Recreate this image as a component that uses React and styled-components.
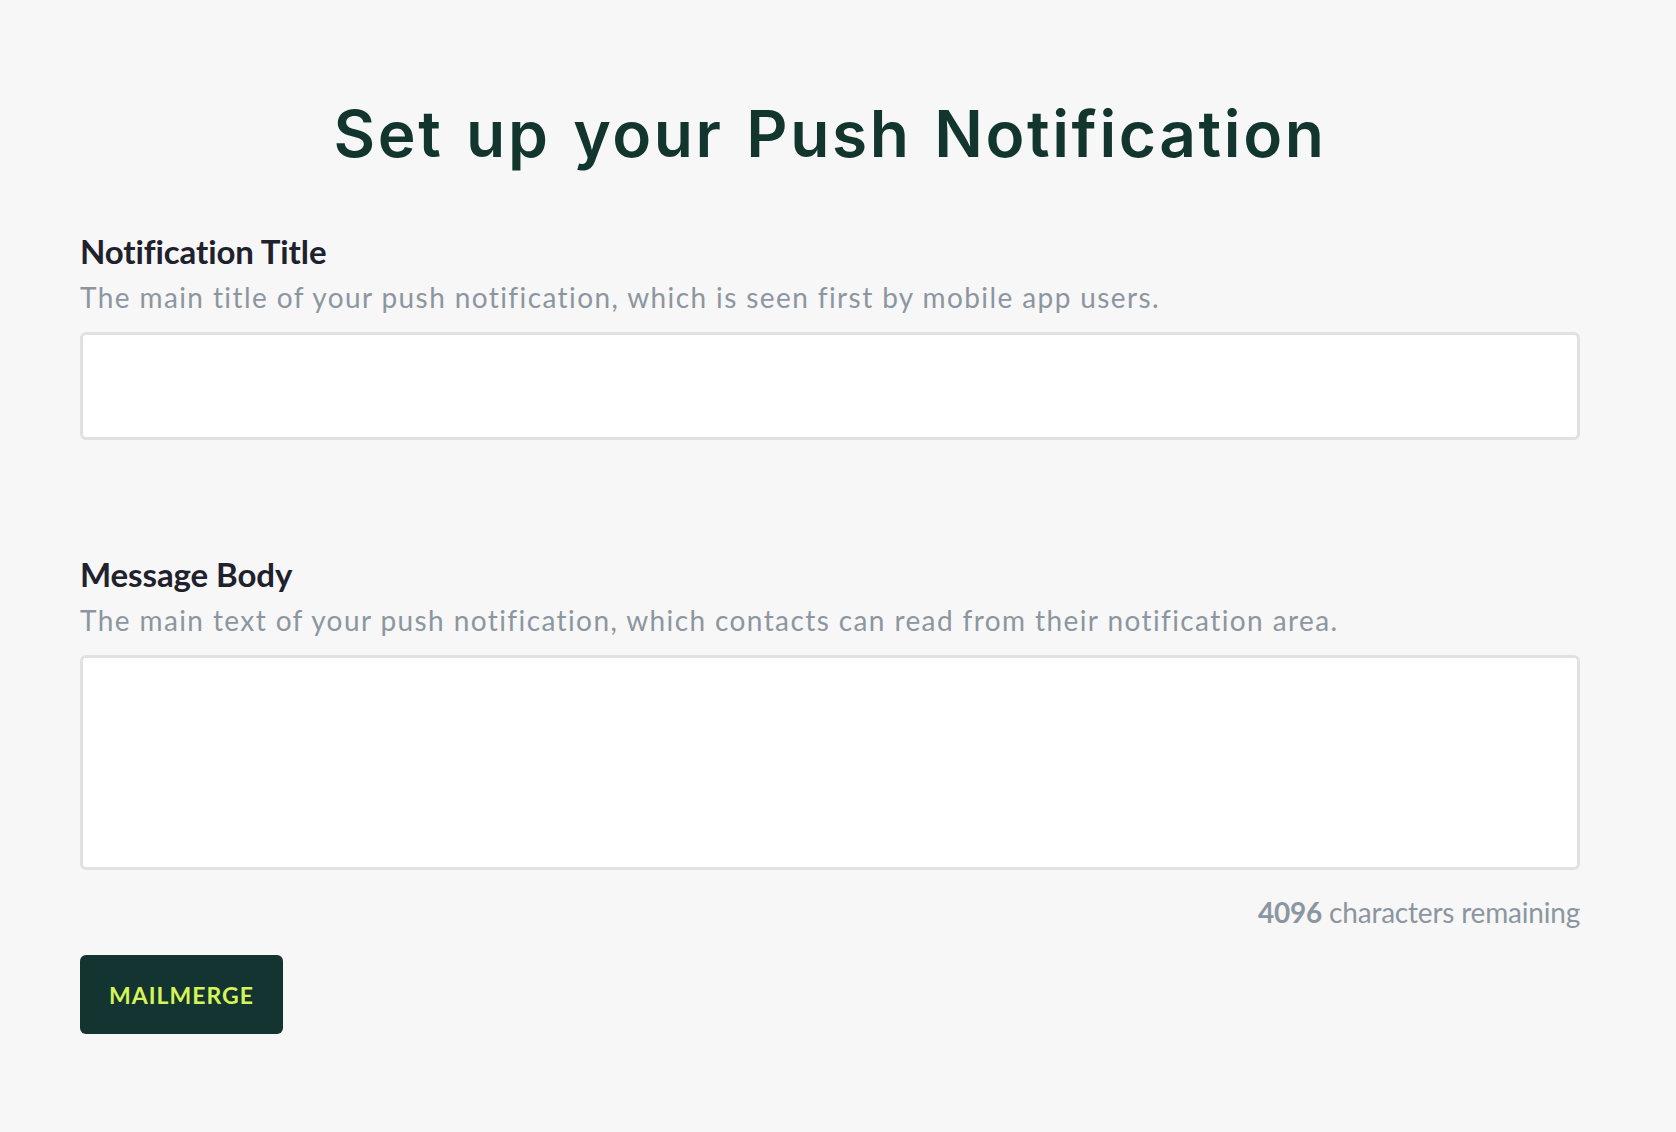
import React from "react";
import styled, { createGlobalStyle } from "styled-components";

const Global = createGlobalStyle`
  html, body { margin: 0; padding: 0; background: #f7f7f7; }
  body { font-family: Lato, "Noto Sans", sans-serif; }
  * { box-sizing: border-box; }
`;

const Page = styled.div`
  min-height: 1132px;
  background: #f7f7f7;
  padding: 98px 96px 0 80px;
`;

const Container = styled.div`
  width: 1500px;
  display: flex;
  flex-direction: column;
`;

const Heading = styled.h1`
  margin: 0 0 61px;
  text-align: center;
  font-family: Inter, "Noto Sans", sans-serif;
  font-weight: 600;
  font-size: 64px;
  line-height: 72px;
  letter-spacing: 2.6px;
  word-spacing: 4px;
  color: #12352e;
`;

const Field = styled.div`
  display: flex;
  flex-direction: column;
  margin-bottom: ${(p) => p.$mb || 0}px;
`;

const Label = styled.label`
  font-family: Lato, "Noto Sans", sans-serif;
  font-weight: 700;
  font-size: 33px;
  line-height: 40px;
  color: #1f222c;
  letter-spacing: -0.1px;
`;

const Hint = styled.p`
  margin: 8px 0 17px;
  font-family: Lato, "Noto Sans", sans-serif;
  font-size: 28px;
  line-height: 36px;
  color: #8c96a0;
  letter-spacing: 1.4px;
`;

const Input = styled.input`
  display: block;
  width: 100%;
  height: 108px;
  border: 3px solid #e1e1e1;
  border-radius: 6px;
  background: #fff;
  outline: none;
  font-size: 28px;
`;

const TextArea = styled.textarea`
  display: block;
  width: 100%;
  height: 215px;
  border: 3px solid #e1e1e1;
  border-radius: 6px;
  background: #fff;
  outline: none;
  resize: none;
  font-size: 28px;
`;

const Counter = styled.div`
  margin-top: 24px;
  text-align: right;
  font-family: Lato, "Noto Sans", sans-serif;
  font-size: 28px;
  line-height: 36px;
  color: #8c96a0;
  letter-spacing: -0.2px;
  b { font-weight: 700; }
`;

const Actions = styled.div`
  margin-top: 25px;
  display: flex;
`;

const Button = styled.button`
  height: 79px;
  width: 203px;
  border: none;
  border-radius: 6px;
  background: #133430;
  color: #d6f35a;
  font-family: Lato, "Noto Sans", sans-serif;
  font-weight: 700;
  font-size: 23px;
  letter-spacing: 1px;
  cursor: pointer;
`;

export default function App() {
  return (
    <>
      <Global />
      <Page>
        <Container>
          <Heading>Set up your Push Notification</Heading>
          <Field $mb={114}>
            <Label>Notification Title</Label>
            <Hint>The main title of your push notification, which is seen first by mobile app users.</Hint>
            <Input type="text" />
          </Field>
          <Field>
            <Label>Message Body</Label>
            <Hint>The main text of your push notification, which contacts can read from their notification area.</Hint>
            <TextArea />
          </Field>
          <Counter>
            <b>4096</b> characters remaining
          </Counter>
          <Actions>
            <Button>MAILMERGE</Button>
          </Actions>
        </Container>
      </Page>
    </>
  );
}
